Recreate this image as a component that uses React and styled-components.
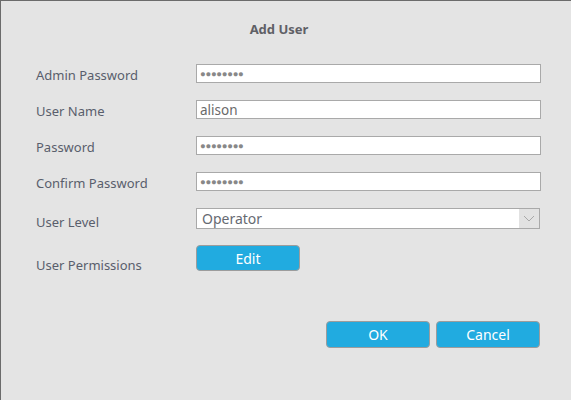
import React from 'react'
import styled, { createGlobalStyle } from 'styled-components'

const GlobalStyle = createGlobalStyle`
  html, body {
    margin: 0;
    padding: 0;
    background: #e4e4e4;
  }
  * {
    box-sizing: border-box;
  }
`

const Dialog = styled.div`
  width: 571px;
  height: 400px;
  background: #e4e4e4;
  border-top: 1px solid #6b6b6b;
  border-left: 1px solid #6b6b6b;
  font-family: 'Noto Sans', 'Open Sans', sans-serif;
  display: flex;
  flex-direction: column;
`

const Title = styled.h1`
  margin: 0;
  padding: 19px 14px 0 0;
  height: 63px;
  text-align: center;
  font-size: 13px;
  font-weight: 700;
  color: #5f6066;
`

const Form = styled.div`
  display: flex;
  flex-direction: column;
  padding-left: 35px;
`

const Row = styled.div`
  display: flex;
  align-items: center;
  height: ${(p) => p.$h}px;
  margin-bottom: ${(p) => p.$gap}px;
`

const Label = styled.div`
  width: 160px;
  font-size: 13px;
  color: #595e6c;
  padding-top: ${(p) => p.$shift || 2}px;
`

const Field = styled.input`
  width: 345px;
  height: 19px;
  margin: 0;
  padding: 0 3px;
  border: 1px solid #a9a9a9;
  background: #fff;
  font-family: 'Noto Sans', 'Open Sans', sans-serif;
  font-size: 13.5px;
  color: #6a6a6a;
  outline: none;
`

const Dots = styled(Field)`
  font-size: 9.5px;
  letter-spacing: -0.3px;
  color: #888888;
`

const Select = styled.div`
  width: 344px;
  height: 21px;
  border: 1px solid #a9a9a9;
  background: #fff;
  display: flex;
  align-items: center;
  font-size: 14px;
  color: #666a72;
`

const SelectText = styled.span`
  flex: 1;
  padding-left: 5px;
`

const Arrow = styled.span`
  width: 20px;
  height: 100%;
  background: #e2e2e2;
  display: flex;
  align-items: center;
  justify-content: center;
`

const Button = styled.button`
  width: 104px;
  height: ${(p) => p.$h || 26}px;
  margin: 0;
  padding: 0;
  border: 1px solid #9c9c9c;
  border-radius: 4px;
  background: #21abe0;
  color: #fff;
  font-family: 'Noto Sans', 'Open Sans', sans-serif;
  font-size: 14px;
`

const Footer = styled.div`
  display: flex;
  justify-content: flex-end;
  gap: 6px;
  padding: 50px 31px 0 0;
`

export default function App() {
  return (
    <>
      <GlobalStyle />
      <Dialog>
        <Title>Add User</Title>
        <Form>
          <Row $h={19} $gap={17}>
            <Label>Admin Password</Label>
            <Dots readOnly value="●●●●●●●●" />
          </Row>
          <Row $h={19} $gap={17}>
            <Label>User Name</Label>
            <Field readOnly value="alison" />
          </Row>
          <Row $h={19} $gap={17}>
            <Label>Password</Label>
            <Dots readOnly value="●●●●●●●●" />
          </Row>
          <Row $h={19} $gap={17}>
            <Label>Confirm Password</Label>
            <Dots readOnly value="●●●●●●●●" />
          </Row>
          <Row $h={21} $gap={16}>
            <Label $shift={6}>User Level</Label>
            <Select>
              <SelectText>Operator</SelectText>
              <Arrow>
                <svg width="12" height="7" viewBox="0 0 12 7">
                  <path d="M1 1l5 5 5-5" fill="none" stroke="#a8a8a8" strokeWidth="1" />
                </svg>
              </Arrow>
            </Select>
          </Row>
          <Row $h={26} $gap={0}>
            <Label $shift={13}>User Permissions</Label>
            <Button>Edit</Button>
          </Row>
        </Form>
        <Footer>
          <Button $h={27}>OK</Button>
          <Button $h={27}>Cancel</Button>
        </Footer>
      </Dialog>
    </>
  )
}
